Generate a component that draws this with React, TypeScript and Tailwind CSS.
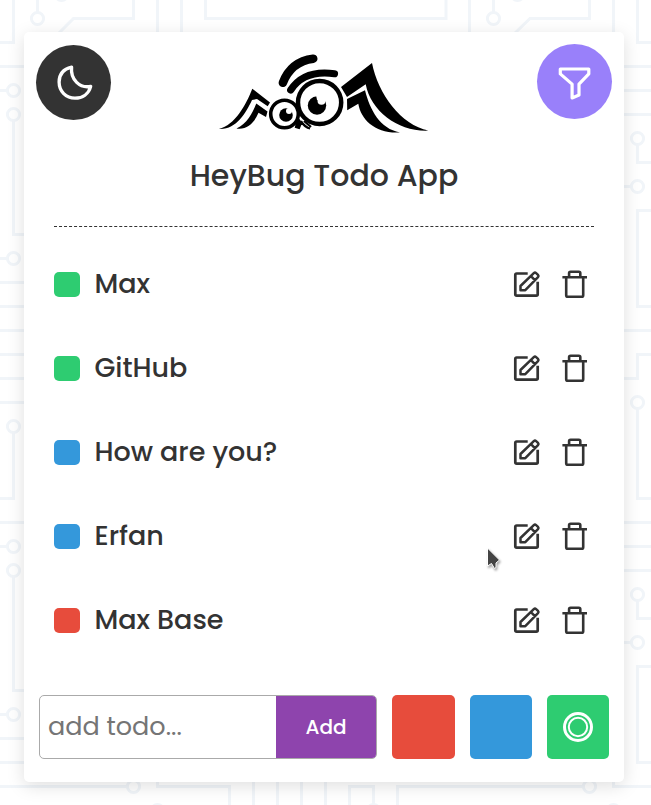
import React from "react";

const nodes: [number, number][] = [
  [13.5, 90.5], [13.5, 114.5], [37.5, 18.5], [61.5, -5.5], [493.5, 18.5], [517.5, -5.5],
  [637.5, 138.5], [637.5, 186.5], [637.5, 402.5], [637.5, 594.5], [637.5, 642.5],
  [589.5, 786.5], [613.5, 810.5], [373.5, 810.5], [133.5, 786.5], [157.5, 810.5],
  [13.5, 258.5], [13.5, 426.5], [13.5, 546.5], [13.5, 570.5], [13.5, 714.5],
];

const traces = [
  "M13.5 0V42.5H0M0 66.5H24M0 90.5H7M13.5 121V234.5H24M37.5 0V12M133.5 0V18.5H73.5L58 34M157.5 0V32M181.5 0V32",
  "M205.5 0V18.5H446V0M469.5 0V32M493.5 0V12M589.5 0V18.5H530L514 34M613.5 0V32M637.5 0V42.5H651",
  "M624 66.5H651M624 90.5H651M624 114.5H651M637.5 145V162.5H651M624 186.5H631M651 210.5H637.5V306.5H651",
  "M624 330.5H651M624 378.5H637.5V354.5H651M637.5 409V498.5H651M624 522.5H651M624 546.5H651M624 570.5H651",
  "M637.5 601V618.5H651M624 642.5H631M651 666.5H637.5V762.5H651M583 786.5H397.5V805M613.5 780V786.5H651",
  "M349.5 805V786.5H373.5V805M325.5 780V805M301.5 780V805M277.5 780V805M253.5 780V805M157.5 780V786.5H229.5V805M0 786.5H127",
  "M0 258.5H7M0 282.5H24M0 306.5H24M0 330.5H24M0 354.5H24M0 378.5H24M0 402.5H24M13.5 433V498.5H0M0 522.5H24",
  "M0 546.5H7M13.5 577V690.5H24M0 714.5H7M0 738.5H24M0 762.5H24",
];

function Circuit() {
  return (
    <svg className="absolute inset-0" width="651" height="805" fill="none" stroke="#f1f5f9" strokeWidth="3">
      {traces.map((d) => <path key={d} d={d} />)}
      {nodes.map(([x, y]) => <circle key={`${x}-${y}`} cx={x} cy={y} r="6.1" />)}
    </svg>
  );
}

function BugLogo() {
  return (
    <svg width="230" height="95" viewBox="210 45 230 95" fill="#000">
      <path d="M219 129C235 125 246 105 252.3 88.7L270 102.5L267.7 106.3L257 99L252 100C246 113 236 130 219 129Z" />
      <path d="M236.5 128.5C247 124 253 112 256.3 103.5L267.5 111.5L266 117L258.5 112.8C254 123 247 130 236.5 128.5Z" />
      <path d="M341 87L372 63C378 94 401 125 428.5 130.6C399 132 371 112 365.7 84.3L347 97Z" />
      <path d="M347 99L365 90.3C370 110 380 129 400 132.4C376 134 361 120 358.3 103.7L347.2 110.3Z" />
      <path d="M282.9 82.7Q291 61.5 313.2 58.7" fill="none" stroke="#000" strokeWidth="8.6" strokeLinecap="round" />
      <path d="M290.7 90Q304 69.5 334.5 73.7" fill="none" stroke="#000" strokeWidth="7.2" strokeLinecap="round" />
      <path d="M298 119L301 123L299 128L296 127ZM301 121Q305 128 310 128.5M304 121L311 127" stroke="#000" strokeWidth="2.2" />
      <circle cx="319.6" cy="102.5" r="21.6" fill="#fff" stroke="#000" strokeWidth="4.5" />
      <circle cx="284.5" cy="114" r="13.8" fill="#fff" stroke="#000" strokeWidth="3.6" />
      <circle cx="317" cy="105.5" r="9.2" />
      <circle cx="321.5" cy="100.8" r="4" fill="#fff" />
      <path d="M316 95H326V100H317Z" fill="#fff" />
      <circle cx="286" cy="115" r="6.8" />
      <circle cx="289" cy="111" r="3" fill="#fff" />
    </svg>
  );
}

function EditIcon() {
  return (
    <svg width="28" height="28" viewBox="0 0 28 28" fill="none" stroke="#333" strokeWidth="2.7" strokeLinejoin="round">
      <path d="M14.7 3.5H3.7Q2.3 3.5 2.3 4.9V24.2Q2.3 25.6 3.7 25.6H23.3Q24.7 25.6 24.7 24.2V11.7" />
      <path d="M7.5 16L20.8 3.1Q22 2.1 23.1 3.1L25 4.9Q26 6 25 7.2L12.3 20.2H7.5ZM18 6.2L21.8 10.2" strokeWidth="2.5" />
    </svg>
  );
}

function TrashIcon() {
  return (
    <svg width="26" height="30" viewBox="0 0 26 30" fill="none" stroke="#333" strokeWidth="2.6" strokeLinejoin="round">
      <path d="M.4 8.3H25M4.2 8V26.2Q4.2 27.8 5.9 27.8H19.5Q21.2 27.8 21.2 26.2V8M7.1 8V4.2Q7.1 2.7 8.6 2.7H16.8Q18.3 2.7 18.3 4.2V8" />
    </svg>
  );
}

const todos = [
  { text: "Max", color: "bg-[#2ecc71]" },
  { text: "GitHub", color: "bg-[#2ecc71]" },
  { text: "How are you?", color: "bg-[#3498db]" },
  { text: "Erfan", color: "bg-[#3498db]" },
  { text: "Max Base", color: "bg-[#e74c3c]" },
];

export default function App() {
  return (
    <div className="relative h-[805px] w-[651px] overflow-hidden bg-white px-6 pt-8 font-['Poppins',Inter,sans-serif] text-[#333]">
      <Circuit />
      <main className="relative flex h-[750px] w-[600px] flex-col rounded-[5px] bg-white shadow-[0_4px_18px_rgba(0,0,0,0.13)]">
        <header className="flex h-[108px] items-start justify-between px-3 pt-3">
          <button className="mt-px flex size-[75px] items-center justify-center rounded-full bg-[#333]">
            <svg width="38" height="38" viewBox="0 0 38 38" fill="none" stroke="#fff" strokeWidth="3.3" strokeLinejoin="round">
              <path d="M16.6 3.2C8 5.2 4.1 11 4.1 18.1C4.1 27.4 11 34.2 20 34.2C27.5 34.2 33.7 30 35.7 22.4C25 24.5 15.3 16 16.6 3.2Z" />
            </svg>
          </button>
          <div className="mt-px mr-[-1px]"><BugLogo /></div>
          <button className="flex size-[75px] items-center justify-center rounded-full bg-[#9980fa]">
            <svg width="36" height="36" viewBox="0 0 36 36" fill="none" stroke="#fff" strokeWidth="3.2" strokeLinejoin="round">
              <path d="M3.3 5H31.8V9.9L22 20.1V31L15.1 33.9V20.1L3.3 9.9Z" />
            </svg>
          </button>
        </header>
        <h1 className="h-[86px] pt-[13px] text-center text-[30px] leading-[46px] font-medium whitespace-nowrap">HeyBug Todo App</h1>
        <div className="mx-[30px] border-t border-dashed border-[#333]" />
        <ul className="mx-[30px] mt-[15px]">
          {todos.map((t) => (
            <li key={t.text} className="flex h-[84px] items-center pr-[6px]">
              <span className={`h-[25px] w-[26px] rounded-[5px] ${t.color}`} />
              <span className="ml-[14.5px] flex-1 text-[27px] leading-10 font-medium">{t.text}</span>
              <span className="mr-[21px]"><EditIcon /></span>
              <TrashIcon />
            </li>
          ))}
        </ul>
        <form className="mt-[33px] ml-[15px] flex h-16">
          <div className="flex w-[338px] overflow-hidden rounded-[5px] border border-[#aaa]">
            <input className="w-[236px] pb-[2px] pl-2 text-[25.5px] outline-none placeholder:text-[#757575]" placeholder="add todo..." />
            <button type="button" className="flex-1 bg-[#8e44ad] text-[20px] font-medium text-white">Add</button>
          </div>
          <button type="button" className="ml-[15px] w-[63px] rounded-[5px] bg-[#e74c3c]" />
          <button type="button" className="ml-[15px] w-[62px] rounded-[5px] bg-[#3498db]" />
          <button type="button" className="ml-[15px] flex w-[62px] items-center justify-center rounded-[5px] bg-[#2ecc71]">
            <svg width="32" height="32" viewBox="0 0 32 32" fill="none" stroke="#fff">
              <circle cx="16" cy="16" r="13.5" strokeWidth="3" />
              <circle cx="16" cy="16" r="9.2" strokeWidth="2" />
            </svg>
          </button>
        </form>
      </main>
      <svg className="absolute top-[545px] left-[483px] drop-shadow-[1px_2px_1px_rgba(0,0,0,0.35)]" width="22" height="28" viewBox="0 0 22 28">
        <path d="M4.5 3V21L8.5 18.5L11.5 23.5L13 22.5V18L16.5 15Z" fill="#444" stroke="#fff" strokeWidth="1" />
      </svg>
    </div>
  );
}
